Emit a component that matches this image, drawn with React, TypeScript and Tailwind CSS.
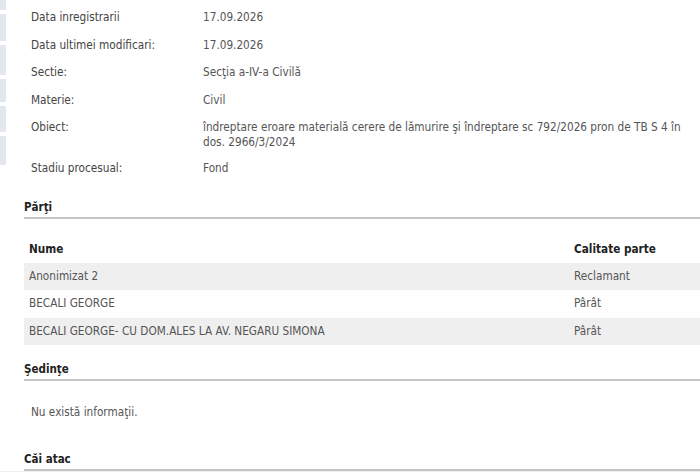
const FONT = { fontFamily: '"DejaVu Sans Condensed", "DejaVu Sans", sans-serif' };

const details: { label: string; value: string; tall?: boolean }[] = [
  { label: "Data inregistrarii", value: "17.09.2026" },
  { label: "Data ultimei modificari:", value: "17.09.2026" },
  { label: "Sectie:", value: "Secţia a-IV-a Civilă" },
  { label: "Materie:", value: "Civil" },
  {
    label: "Obiect:",
    value:
      "îndreptare eroare materială cerere de lămurire şi îndreptare sc 792/2026 pron de TB S 4 în dos. 2966/3/2024",
    tall: true,
  },
  { label: "Stadiu procesual:", value: "Fond" },
];

const parti = [
  { nume: "Anonimizat 2", calitate: "Reclamant" },
  { nume: "BECALI GEORGE", calitate: "Pârât" },
  { nume: "BECALI GEORGE- CU DOM.ALES LA AV. NEGARU SIMONA", calitate: "Pârât" },
];

// sidebar remnants on the far left
const strips = [
  "h-[10px]",
  "h-[27px]",
  "h-[30px]",
  "h-[23px]",
  "h-[26px]",
  "h-[29px]",
];

function Heading({ children }: { children: React.ReactNode }) {
  return (
    <div className="border-b-2 border-[#c4c4c4] pb-[2px] text-[11.5px] leading-[15px] font-bold text-[#222]">
      {children}
    </div>
  );
}

export default function App() {
  return (
    <div
      className="relative h-[472px] w-[700px] overflow-hidden bg-white text-[11.7px] leading-[15px]"
      style={FONT}
    >
      <div className="absolute left-0 top-0 flex w-[6px] flex-col gap-[4px]">
        {strips.map((h, i) => (
          <div key={i} className={`${h} bg-[#e3e7ee]`} />
        ))}
      </div>

      <div className="pl-[24px]">
        {/* Case details */}
        <div className="pl-[7px] pt-[10px] text-[#444]">
          {details.map((d) => (
            <div key={d.label} className={`flex ${d.tall ? "h-[41px]" : "h-[27.5px]"}`}>
              <div className="w-[172px] shrink-0">{d.label}</div>
              <div className="w-[490px] text-[#555]">{d.value}</div>
            </div>
          ))}
        </div>

        {/* Parti */}
        <div className="mt-[11px]">
          <Heading>Părţi</Heading>
          <table className="mt-[17px] w-full border-collapse text-left">
            <thead>
              <tr>
                <th className="h-[27px] pl-[5px] font-bold text-[#222]">Nume</th>
                <th className="w-[126px] font-bold text-[#222]">Calitate parte</th>
              </tr>
            </thead>
            <tbody className="text-[#555]">
              {parti.map((p, i) => (
                <tr key={i} className={i % 2 === 0 ? "bg-[#efefef]" : "bg-white"}>
                  <td className="h-[27.5px] pl-[5px]">{p.nume}</td>
                  <td>{p.calitate}</td>
                </tr>
              ))}
            </tbody>
          </table>
        </div>

        {/* Sedinte */}
        <div className="mt-[17px]">
          <Heading>Şedinţe</Heading>
          <div className="pl-[7px] pt-[24px] text-[#555]">Nu există informaţii.</div>
        </div>

        {/* Cai atac */}
        <div className="mt-[32px]">
          <Heading>Căi atac</Heading>
        </div>
      </div>
      <div className="h-[10px] bg-[#efefef]" />
    </div>
  );
}
